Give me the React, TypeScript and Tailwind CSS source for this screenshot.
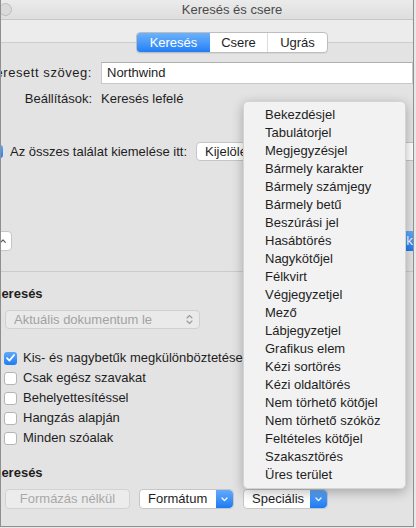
import React from "react";

const menuItems = [
  "Bekezdésjel",
  "Tabulátorjel",
  "Megjegyzésjel",
  "Bármely karakter",
  "Bármely számjegy",
  "Bármely betű",
  "Beszúrási jel",
  "Hasábtörés",
  "Nagykötőjel",
  "Félkvirt",
  "Végjegyzetjel",
  "Mező",
  "Lábjegyzetjel",
  "Grafikus elem",
  "Kézi sortörés",
  "Kézi oldaltörés",
  "Nem törhető kötőjel",
  "Nem törhető szóköz",
  "Feltételes kötőjel",
  "Szakasztörés",
  "Üres terület",
];

const options = [
  { label: "Kis- és nagybetűk megkülönböztetése", checked: true },
  { label: "Csak egész szavakat", checked: false },
  { label: "Behelyettesítéssel", checked: false },
  { label: "Hangzás alapján", checked: false },
  { label: "Minden szóalak", checked: false },
];

const Check = () => (
  <svg width="9" height="8" viewBox="0 0 9 8" fill="none">
    <path d="M1 4.2 L3.4 6.6 L8 1" stroke="white" strokeWidth="1.7" strokeLinecap="round" strokeLinejoin="round" />
  </svg>
);

const Checkbox = ({ checked }: { checked: boolean }) =>
  checked ? (
    <span className="w-[13px] h-[13px] shrink-0 rounded-[3px] bg-gradient-to-b from-[#5ea8f9] to-[#1c7cf4] flex items-center justify-center">
      <Check />
    </span>
  ) : (
    <span className="w-[13px] h-[13px] shrink-0 rounded-[3px] bg-white border border-[#b5b5b5]" />
  );

const BlueChevron = () => (
  <span className="w-[17px] h-full shrink-0 rounded-r-[4px] bg-gradient-to-b from-[#62aafa] to-[#1a7bf3] flex items-center justify-center">
    <svg width="7" height="5" viewBox="0 0 7 5" fill="none">
      <path d="M1 1 L3.5 3.6 L6 1" stroke="white" strokeWidth="1.3" strokeLinecap="round" strokeLinejoin="round" />
    </svg>
  </span>
);

const App = () => {
  return (
    <div className="w-[416px] h-[528px] overflow-hidden bg-[#e8e8e8] font-['Liberation_Sans',Arial,sans-serif] text-[13px] text-[#1e1e1e]">
      <div className="relative w-[414px] h-[527px] overflow-hidden border-l border-r border-b border-[#8f8f8f] bg-[#e3e3e3]">
        {/* title bar */}
        <div className="h-[20px] flex items-center border-b border-[#c6c6c6] bg-gradient-to-b from-[#ebebeb] to-[#dedede]">
          <span className="-ml-[2px] w-[13px] h-[13px] shrink-0 rounded-full bg-[#dadada] border border-[#bcbcbc]" />
          <div className="w-[440px] shrink-0 flex justify-center text-[#4a4a4a]">Keresés és csere</div>
        </div>
        <div className="h-[22px] bg-[#ececec]" />

        {/* tab box */}
        <div className="border-t border-[#cdcdcd]">
          <div className="relative z-10 -mt-[11px] w-[462px] flex justify-center">
            <div className="flex h-[21px] rounded-[4px] border border-[#bdbdbd] bg-white overflow-hidden shadow-[0_1px_0_rgba(0,0,0,0.05)]">
              <div className="w-[73px] flex items-center justify-center text-white bg-gradient-to-b from-[#6cb2fb] to-[#1f7ff5]">Keresés</div>
              <div className="w-[58px] flex items-center justify-center border-r border-[#dcdcdc]">Csere</div>
              <div className="w-[59px] flex items-center justify-center">Ugrás</div>
            </div>
          </div>

          <div className="mt-[9px] flex items-center h-[22px]">
            <div className="w-[91px] shrink-0 flex justify-end whitespace-nowrap tracking-[0.55px]">Keresett szöveg:</div>
            <div className="ml-[9px] flex-1 h-full bg-white border border-[#c8c8c8] border-t-[#afafaf] pl-[5px] flex items-center">Northwind</div>
          </div>

          <div className="mt-[7px] flex items-center h-[16px]">
            <div className="w-[91px] shrink-0 flex justify-end whitespace-nowrap">Beállítások:</div>
            <div className="ml-[9px]">Keresés lefelé</div>
          </div>

          <div className="mt-[35px] flex items-center h-[19px] whitespace-nowrap">
            <span className="-ml-[11px]">
              <Checkbox checked />
            </span>
            <span className="ml-[7px]">Az összes találat kiemelése itt:</span>
            <div className="ml-[9px] w-[230px] shrink-0 h-full rounded-[4px] bg-white border border-[#c6c6c6] pl-[8px] flex items-center">Kijelölés</div>
          </div>

          <div className="mt-[70px] flex items-center h-[20px] whitespace-nowrap">
            <div className="-ml-[11px] w-[22px] h-full shrink-0 rounded-[4px] bg-white border border-[#c6c6c6] flex items-center justify-end pr-[5px]">
              <svg width="6" height="4" viewBox="0 0 6 4" fill="none">
                <path d="M0.7 3.3 L3 0.9 L5.3 3.3" stroke="#555" strokeWidth="1.1" strokeLinecap="round" strokeLinejoin="round" />
              </svg>
            </div>
            <div className="ml-[318px] shrink-0 h-full rounded-[4px] px-[12px] flex items-center text-white bg-gradient-to-b from-[#62aafa] to-[#1a7bf3]">Következő keresése</div>
          </div>

          <div className="mt-[20px] h-px bg-[#cbcbcb]" />

          <div className="mt-[14px] h-[16px] -ml-[9px] font-bold flex items-center">Keresés</div>

          <div className="mt-[8px] ml-[4px] w-[195px] h-[19px] rounded-[4px] bg-[#eaeaea] border border-[#d0d0d0] flex items-center justify-between pl-[8px] pr-[6px] text-[#a2a2a2]">
            <span>Aktuális dokumentum le</span>
            <svg width="7" height="11" viewBox="0 0 7 11" fill="none">
              <path d="M1 4 L3.5 1.5 L6 4 M1 7 L3.5 9.5 L6 7" stroke="#9a9a9a" strokeWidth="1.1" strokeLinecap="round" strokeLinejoin="round" />
            </svg>
          </div>

          <div className="mt-[19px] flex flex-col">
            {options.map((o) => (
              <div key={o.label} className="h-[20px] flex items-center ml-[3px] whitespace-nowrap">
                <Checkbox checked={o.checked} />
                <span className="ml-[6px]">{o.label}</span>
              </div>
            ))}
          </div>

          <div className="mt-[17px] h-[16px] -ml-[9px] font-bold flex items-center">Keresés</div>

          <div className="mt-[8px] ml-[4px] flex items-center h-[20px] gap-[9px] whitespace-nowrap">
            <div className="w-[125px] h-full rounded-[4px] bg-[#ececec] border border-[#d2d2d2] flex items-center justify-center text-[#a8a8a8]">Formázás nélkül</div>
            <div className="w-[95px] h-full rounded-[4px] bg-white border border-[#c6c6c6] flex items-center justify-between pl-[8px] overflow-hidden">
              <span>Formátum</span>
              <BlueChevron />
            </div>
            <div className="w-[85px] h-full rounded-[4px] bg-white border border-[#c6c6c6] flex items-center justify-between pl-[8px] overflow-hidden">
              <span>Speciális</span>
              <BlueChevron />
            </div>
          </div>
        </div>

        {/* open popup menu */}
        <div className="absolute z-20 left-[242px] top-[101px] w-[163px] py-[4px] rounded-[5px] bg-[#f2f2f2] border border-[#d4d4d4] shadow-[0_3px_12px_rgba(0,0,0,0.28)]">
          {menuItems.map((item) => (
            <div key={item} className="h-[18px] leading-[18px] pl-[21px] whitespace-nowrap text-[#1e1e1e]">
              {item}
            </div>
          ))}
        </div>
      </div>
    </div>
  );
};

export default App;
